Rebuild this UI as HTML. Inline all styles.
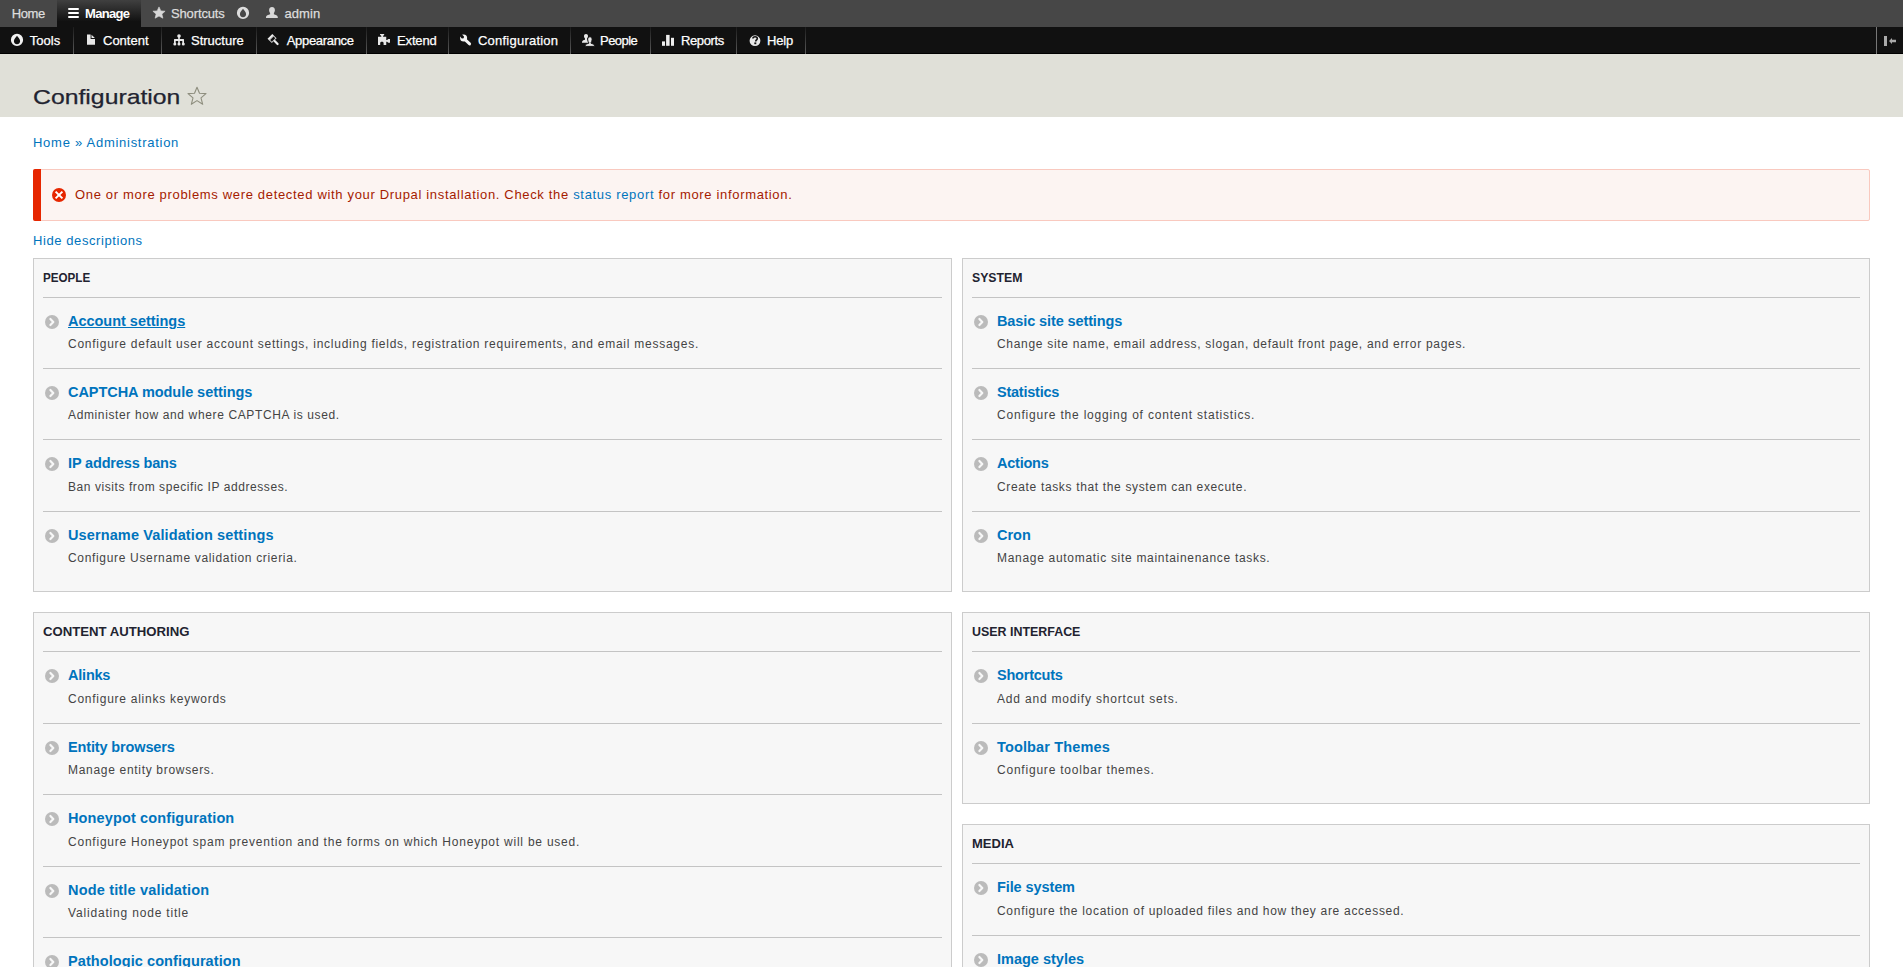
<!DOCTYPE html>
<html><head><meta charset="utf-8">
<style>
*{box-sizing:border-box;margin:0;padding:0}
html,body{width:1903px;height:967px;overflow:hidden;background:#fff}
body{font-family:"Liberation Sans",sans-serif;font-size:13px;color:#222330;position:relative}
a{color:#0074bd;text-decoration:none}
.abs{position:absolute;white-space:nowrap}
#bar{position:absolute;left:0;top:0;width:1903px;height:27px;background:#474747}
#manage{position:absolute;left:57px;top:0;width:84px;height:27px;background:linear-gradient(#404040,#111 80%)}
#tray{position:absolute;left:0;top:27px;width:1903px;height:27px;background:#111;border-bottom:1px solid #000}
.sep{position:absolute;top:0;width:1px;height:27px;background:linear-gradient(#1c1c1c,#5c5c5c)}
.tb{position:absolute;top:0;line-height:27px;font-size:13px;color:#fff;white-space:nowrap;-webkit-text-stroke:0.25px currentColor}
.tbg{color:#ddd}
svg.ic{position:absolute}
#head{position:absolute;left:0;top:54px;width:1903px;height:63px;background:#e0e0d8}
#title{position:absolute;left:32.5px;top:82px;font-size:21px;line-height:30px;color:#222330;-webkit-text-stroke:0.25px #222330;white-space:nowrap;transform:scaleX(1.18);transform-origin:0 0}
#msg{position:absolute;left:33px;top:169px;width:1837px;height:52px;background:#fcf4f2;border:1px solid #f9c9bf;border-radius:2px}
#msgbar{position:absolute;left:33px;top:169px;width:8px;height:52px;background:#e62600;border-radius:2px 0 0 2px}
.txt{letter-spacing:0.7px;line-height:16px}
.panel{position:absolute;background:#f7f7f7;border:1px solid #ccc}
.ph{position:absolute;left:9px;top:11px;transform-origin:0 0;font-size:13px;line-height:16px;font-weight:bold;color:#222330;white-space:nowrap}
.it{position:absolute;left:9px;right:9px;border-top:1px solid #c4c4c4}
.chev{position:absolute;left:2px;top:17px;width:14px;height:14px}
.t{position:absolute;left:25px;top:14px;font-size:14.5px;font-weight:bold;color:#0074bd;white-space:nowrap;line-height:18px}
.d{position:absolute;left:25px;top:38px;font-size:12px;color:#444;white-space:nowrap;line-height:16px}
</style></head><body>
<div id="bar"></div>
<div id="manage"></div>
<div class="tb tbg" id="tb_home" style="left:11.68px;;letter-spacing:-0.360px">Home</div>
<svg class="ic" style="left:68px;top:8px" width="11" height="10" viewBox="0 0 11 10"><rect x="0" y="0" width="11" height="2" rx="1" fill="#fff"/><rect x="0" y="4" width="11" height="2" rx="1" fill="#fff"/><rect x="0" y="8" width="11" height="2" rx="1" fill="#fff"/></svg>
<div class="tb" id="tb_manage" style="left:85.00px;font-weight:bold;-webkit-text-stroke:0;letter-spacing:-0.684px">Manage</div>
<svg class="ic" style="left:152px;top:6px" width="14" height="14" viewBox="0 0 14 14"><path d="M7 0.9 L8.9 4.9 L13.1 5.2 L9.9 8.1 L10.9 12.2 L7 10.1 L3.1 12.2 L4.1 8.1 L0.9 5.2 L5.1 4.9 Z" fill="#d8d8d8" stroke="#d8d8d8" stroke-width="0.6" stroke-linejoin="round"/></svg>
<div class="tb tbg" id="tb_short" style="left:171.00px;;letter-spacing:-0.138px">Shortcuts</div>
<svg class="ic" style="left:236px;top:6px" width="14" height="14" viewBox="0 0 14 14"><path fill-rule="evenodd" fill="#ddd" d="M7 0.8 A6.1 6.1 0 1 1 7 13 A6.1 6.1 0 1 1 7 0.8 Z M7 2.8 C7.6 3.9 10.1 5.8 10.1 8.1 A3.1 3.1 0 0 1 3.9 8.1 C3.9 5.8 6.4 3.9 7 2.8 Z"/></svg>
<svg class="ic" style="left:266px;top:7px" width="12" height="12" viewBox="0 0 12 12"><path fill="#d8d8d8" d="M6 0 C7.7 0 8.9 1.3 8.9 3.1 C8.9 4.4 8.3 5.6 7.9 6.1 L7.9 7.2 C9.6 7.7 11.8 8.3 11.8 10.2 L11.8 11.1 L0 11.1 L0 10.2 C0 8.3 2.3 7.7 4.1 7.2 L4.1 6.1 C3.6 5.6 3.1 4.4 3.1 3.1 C3.1 1.3 4.3 0 6 0 Z"/></svg>
<div class="tb tbg" id="tb_admin" style="left:284.40px;;letter-spacing:0.112px">admin</div>

<div id="tray">
<div class="sep" style="left:73px"></div>
<div class="sep" style="left:161px"></div>
<div class="sep" style="left:256px"></div>
<div class="sep" style="left:366px"></div>
<div class="sep" style="left:448px"></div>
<div class="sep" style="left:570px"></div>
<div class="sep" style="left:650px"></div>
<div class="sep" style="left:736px"></div>
<div class="sep" style="left:805px"></div>
<div class="sep" style="left:1876px;background:#777"></div>
<svg class="ic" style="left:10px;top:6px" width="14" height="14" viewBox="0 0 14 14"><path fill-rule="evenodd" fill="#f2f2f2" d="M7 0.8 A6.1 6.1 0 1 1 7 13 A6.1 6.1 0 1 1 7 0.8 Z M7 2.8 C7.6 3.9 10.1 5.8 10.1 8.1 A3.1 3.1 0 0 1 3.9 8.1 C3.9 5.8 6.4 3.9 7 2.8 Z"/></svg>
<div class="tb" id="tr_tools" style="left:29.80px;letter-spacing:0.000px">Tools</div>
<svg class="ic" style="left:87px;top:7px" width="8" height="11" viewBox="0 0 8 11"><path d="M0 0.5 L3.6 0.5 L3.6 4.9 L8 4.9 L8 10.8 L0 10.8 Z" fill="#e8e8e8"/><path d="M4.5 0.7 L7.9 4.1 L4.5 4.1 Z" fill="#e8e8e8"/></svg>
<div class="tb" id="tr_content" style="left:103.00px;letter-spacing:0.000px">Content</div>
<svg class="ic" style="left:173px;top:7px" width="12" height="12" viewBox="0 0 12 12"><g fill="#e8e8e8"><circle cx="6" cy="2" r="1.8"/><rect x="5.2" y="2.5" width="1.6" height="4"/><rect x="1" y="5.1" width="10" height="1.9" rx="0.9"/><rect x="1" y="5.5" width="1.7" height="4"/><rect x="5.2" y="5.5" width="1.6" height="4"/><rect x="9.3" y="5.5" width="1.7" height="4"/><circle cx="1.8" cy="9.9" r="1.5"/><circle cx="6" cy="10" r="1.5"/><circle cx="10.3" cy="9.9" r="1.5"/></g></svg>
<div class="tb" id="tr_structure" style="left:191.00px;letter-spacing:0.000px">Structure</div>
<svg class="ic" style="left:267px;top:6px" width="14" height="14" viewBox="0 0 14 14"><g transform="translate(5.2 5.6) rotate(-45)"><rect x="-3.4" y="-3.2" width="6.8" height="2.2" fill="#eee"/><rect x="-2.9" y="-1" width="5.8" height="3.4" fill="none" stroke="#ccc" stroke-width="1"/><rect x="-1.1" y="2.4" width="2.2" height="6.3" rx="1.1" fill="#eee"/></g></svg>
<div class="tb" id="tr_appearance" style="left:286.72px;letter-spacing:-0.310px">Appearance</div>
<svg class="ic" style="left:378px;top:6px" width="12" height="12" viewBox="0 0 12 12"><path fill="#e8e8e8" d="M0 3.8 L3.3 3.8 L3.3 2.9 L2 1.7 L2 0.9 L6.2 0.9 L6.2 1.7 L5.1 2.9 L5.1 3.8 L8.25 3.8 L8.25 6.9 L9.1 6.9 L10.3 5.9 L12 5.9 L12 9.8 L10.3 9.8 L9.1 8.8 L8.25 8.8 L8.25 11.9 L5.6 11.9 L5.6 10 C5.6 8.3 2.2 8.3 2.2 10 L2.2 11.9 L0 11.9 Z"/></svg>
<div class="tb" id="tr_extend" style="left:397.00px;letter-spacing:-0.144px">Extend</div>
<svg class="ic" style="left:459px;top:6px" width="14" height="14" viewBox="0 0 14 14"><g><circle cx="4.6" cy="5.1" r="3.5" fill="#f4f4f4"/><line x1="5" y1="5.6" x2="10.6" y2="10.9" stroke="#f4f4f4" stroke-width="2.9" stroke-linecap="round"/><circle cx="3.5" cy="4" r="1.5" fill="#111"/><line x1="3.5" y1="4" x2="0.6" y2="1.1" stroke="#111" stroke-width="2.6"/></g></svg>
<div class="tb" id="tr_config" style="left:478.00px;letter-spacing:0.225px">Configuration</div>
<svg class="ic" style="left:582px;top:6px" width="13" height="14" viewBox="0 0 13 14"><g fill="#e8e8e8"><path d="M4 0.9 C5.2 0.9 6 1.8 6 3.1 C6 4.2 5.5 5.2 5 5.6 L5 6.7 C5.6 6.9 6 7.2 6 7.4 L6 9.8 L0 9.8 L0 9.2 C0 7.8 1.5 7.1 3 6.7 L3 5.6 C2.5 5.2 2 4.2 2 3.1 C2 1.8 2.8 0.9 4 0.9 Z"/><path stroke="#111" stroke-width="1" d="M7.9 3.8 C9.3 3.8 10.1 5 10.1 6.6 C10.1 7.9 9.6 9 9.1 9.5 L9.1 10.3 C10.7 10.8 12.4 11.3 12.4 12.4 L12.4 13.4 L3.3 13.4 L3.3 12.4 C3.3 11.3 5 10.8 6.7 10.3 L6.7 9.5 C6.2 9 5.7 7.9 5.7 6.6 C5.7 5 6.5 3.8 7.9 3.8 Z"/></g></svg>
<div class="tb" id="tr_people" style="left:600.00px;letter-spacing:-0.540px">People</div>
<svg class="ic" style="left:662px;top:7px" width="12" height="12" viewBox="0 0 12 12"><g fill="#eee"><rect x="0" y="7.4" width="3" height="4.4"/><rect x="4.1" y="0.9" width="3.5" height="10.9"/><rect x="9" y="3.8" width="3" height="8"/></g></svg>
<div class="tb" id="tr_reports" style="left:681.00px;letter-spacing:-0.390px">Reports</div>
<svg class="ic" style="left:749px;top:6px" width="12" height="14" viewBox="0 0 12 14"><circle cx="6" cy="7.7" r="5.4" fill="#e8e8e8"/><path d="M3.9 5.6 C3.9 4.4 4.8 3.7 6.1 3.7 C7.4 3.7 8.3 4.4 8.3 5.5 C8.3 6.9 6.7 7 6.7 8.6" fill="none" stroke="#111" stroke-width="1.6"/><rect x="5.3" y="9.4" width="2" height="1.8" fill="#111"/></svg>
<div class="tb" id="tr_help" style="left:767.00px;letter-spacing:-0.180px">Help</div>
<svg class="ic" style="left:1884px;top:9px" width="13" height="10" viewBox="0 0 13 10"><rect x="0" y="0" width="3" height="10" fill="#aaa"/><path d="M5 5 L8 2 L8 3.8 L12 3.8 L12 6.2 L8 6.2 L8 8 Z" fill="#aaa"/></svg>
</div>

<div id="head"></div>
<div id="title">Configuration</div>
<svg class="ic" style="left:187px;top:86px" width="20" height="20" viewBox="0 0 20 20"><path d="M10 1.2 L12.5 7.3 L19 7.6 L14 11.8 L15.7 18.3 L10 14.6 L4.3 18.3 L6 11.8 L1 7.6 L7.5 7.3 Z" fill="none" stroke="#8e8e7e" stroke-width="1.1" stroke-linejoin="round"/></svg>

<div class="abs txt" id="bc" style="left:33px;top:135px;letter-spacing:0.727px"><a>Home</a> <span style="color:#0074bd">»</span> <a>Administration</a></div>

<div id="msg"></div><div id="msgbar"></div>
<svg class="ic" style="left:52px;top:188px" width="14" height="14" viewBox="0 0 14 14"><circle cx="7" cy="7" r="7" fill="#e62600"/><path d="M3.6 3.6 L10.4 10.4 M10.4 3.6 L3.6 10.4" stroke="#fff" stroke-width="2"/></svg>
<div class="abs txt" id="msgt" style="left:75px;top:187px;color:#a51b00;letter-spacing:0.670px">One or more problems were detected with your Drupal installation. Check the <a>status report</a> for more information.</div>

<div class="abs txt" id="hide" style="left:33px;top:233px;letter-spacing:0.587px"><a>Hide descriptions</a></div>

<div class="panel" style="left:33px;top:258px;width:919px;height:334px">
<div class="ph" id="h0" style="transform:scaleX(0.8944)">PEOPLE</div>
<div class="it" style="top:38px;height:71px"><svg class="chev" viewBox="0 0 14 14"><circle cx="7" cy="7" r="7" fill="#bbb"/><path d="M5.4 4 L8.3 7 L5.4 10" fill="none" stroke="#f7f7f7" stroke-width="2.2" stroke-linecap="round" stroke-linejoin="round"/></svg><a class="t" id="t0_0" style="letter-spacing:-0.024px;text-decoration:underline">Account settings</a><div class="d" id="d0_0" style="top:38px;letter-spacing:0.743px">Configure default user account settings, including fields, registration requirements, and email messages.</div></div>
<div class="it" style="top:109px;height:71px"><svg class="chev" viewBox="0 0 14 14"><circle cx="7" cy="7" r="7" fill="#bbb"/><path d="M5.4 4 L8.3 7 L5.4 10" fill="none" stroke="#f7f7f7" stroke-width="2.2" stroke-linecap="round" stroke-linejoin="round"/></svg><a class="t" id="t0_1" style="letter-spacing:-0.056px">CAPTCHA module settings</a><div class="d" id="d0_1" style="top:38px;letter-spacing:0.626px">Administer how and where CAPTCHA is used.</div></div>
<div class="it" style="top:180px;height:72px"><svg class="chev" viewBox="0 0 14 14"><circle cx="7" cy="7" r="7" fill="#bbb"/><path d="M5.4 4 L8.3 7 L5.4 10" fill="none" stroke="#f7f7f7" stroke-width="2.2" stroke-linecap="round" stroke-linejoin="round"/></svg><a class="t" id="t0_2" style="letter-spacing:-0.149px">IP address bans</a><div class="d" id="d0_2" style="top:39px;letter-spacing:0.569px">Ban visits from specific IP addresses.</div></div>
<div class="it" style="top:252px;height:80px"><svg class="chev" viewBox="0 0 14 14"><circle cx="7" cy="7" r="7" fill="#bbb"/><path d="M5.4 4 L8.3 7 L5.4 10" fill="none" stroke="#f7f7f7" stroke-width="2.2" stroke-linecap="round" stroke-linejoin="round"/></svg><a class="t" id="t0_3" style="letter-spacing:0.118px">Username Validation settings</a><div class="d" id="d0_3" style="top:38px;letter-spacing:0.669px">Configure Username validation crieria.</div></div>
</div>
<div class="panel" style="left:962px;top:258px;width:908px;height:334px">
<div class="ph" id="h1" style="transform:scaleX(0.9434)">SYSTEM</div>
<div class="it" style="top:38px;height:71px"><svg class="chev" viewBox="0 0 14 14"><circle cx="7" cy="7" r="7" fill="#bbb"/><path d="M5.4 4 L8.3 7 L5.4 10" fill="none" stroke="#f7f7f7" stroke-width="2.2" stroke-linecap="round" stroke-linejoin="round"/></svg><a class="t" id="t1_0" style="letter-spacing:-0.110px">Basic site settings</a><div class="d" id="d1_0" style="top:38px;letter-spacing:0.695px">Change site name, email address, slogan, default front page, and error pages.</div></div>
<div class="it" style="top:109px;height:71px"><svg class="chev" viewBox="0 0 14 14"><circle cx="7" cy="7" r="7" fill="#bbb"/><path d="M5.4 4 L8.3 7 L5.4 10" fill="none" stroke="#f7f7f7" stroke-width="2.2" stroke-linecap="round" stroke-linejoin="round"/></svg><a class="t" id="t1_1" style="letter-spacing:-0.240px">Statistics</a><div class="d" id="d1_1" style="top:38px;letter-spacing:0.805px">Configure the logging of content statistics.</div></div>
<div class="it" style="top:180px;height:72px"><svg class="chev" viewBox="0 0 14 14"><circle cx="7" cy="7" r="7" fill="#bbb"/><path d="M5.4 4 L8.3 7 L5.4 10" fill="none" stroke="#f7f7f7" stroke-width="2.2" stroke-linecap="round" stroke-linejoin="round"/></svg><a class="t" id="t1_2" style="letter-spacing:-0.240px">Actions</a><div class="d" id="d1_2" style="top:39px;letter-spacing:0.651px">Create tasks that the system can execute.</div></div>
<div class="it" style="top:252px;height:80px"><svg class="chev" viewBox="0 0 14 14"><circle cx="7" cy="7" r="7" fill="#bbb"/><path d="M5.4 4 L8.3 7 L5.4 10" fill="none" stroke="#f7f7f7" stroke-width="2.2" stroke-linecap="round" stroke-linejoin="round"/></svg><a class="t" id="t1_3" style="letter-spacing:-0.030px">Cron</a><div class="d" id="d1_3" style="top:38px;letter-spacing:0.696px">Manage automatic site maintainenance tasks.</div></div>
</div>
<div class="panel" style="left:33px;top:612px;width:919px;height:400px">
<div class="ph" id="h2" style="transform:scaleX(1.0124)">CONTENT AUTHORING</div>
<div class="it" style="top:38px;height:72px"><svg class="chev" viewBox="0 0 14 14"><circle cx="7" cy="7" r="7" fill="#bbb"/><path d="M5.4 4 L8.3 7 L5.4 10" fill="none" stroke="#f7f7f7" stroke-width="2.2" stroke-linecap="round" stroke-linejoin="round"/></svg><a class="t" id="t2_0" style="letter-spacing:-0.216px">Alinks</a><div class="d" id="d2_0" style="top:39px;letter-spacing:0.742px">Configure alinks keywords</div></div>
<div class="it" style="top:110px;height:71px"><svg class="chev" viewBox="0 0 14 14"><circle cx="7" cy="7" r="7" fill="#bbb"/><path d="M5.4 4 L8.3 7 L5.4 10" fill="none" stroke="#f7f7f7" stroke-width="2.2" stroke-linecap="round" stroke-linejoin="round"/></svg><a class="t" id="t2_1" style="letter-spacing:-0.140px">Entity browsers</a><div class="d" id="d2_1" style="top:38px;letter-spacing:0.689px">Manage entity browsers.</div></div>
<div class="it" style="top:181px;height:72px"><svg class="chev" viewBox="0 0 14 14"><circle cx="7" cy="7" r="7" fill="#bbb"/><path d="M5.4 4 L8.3 7 L5.4 10" fill="none" stroke="#f7f7f7" stroke-width="2.2" stroke-linecap="round" stroke-linejoin="round"/></svg><a class="t" id="t2_2" style="letter-spacing:0.129px">Honeypot configuration</a><div class="d" id="d2_2" style="top:39px;letter-spacing:0.773px">Configure Honeypot spam prevention and the forms on which Honeypot will be used.</div></div>
<div class="it" style="top:253px;height:71px"><svg class="chev" viewBox="0 0 14 14"><circle cx="7" cy="7" r="7" fill="#bbb"/><path d="M5.4 4 L8.3 7 L5.4 10" fill="none" stroke="#f7f7f7" stroke-width="2.2" stroke-linecap="round" stroke-linejoin="round"/></svg><a class="t" id="t2_3" style="letter-spacing:0.171px">Node title validation</a><div class="d" id="d2_3" style="top:38px;letter-spacing:0.820px">Validating node title</div></div>
<div class="it" style="top:324px;height:74px"><svg class="chev" viewBox="0 0 14 14"><circle cx="7" cy="7" r="7" fill="#bbb"/><path d="M5.4 4 L8.3 7 L5.4 10" fill="none" stroke="#f7f7f7" stroke-width="2.2" stroke-linecap="round" stroke-linejoin="round"/></svg><a class="t" id="t2_4" style="letter-spacing:0.078px">Pathologic configuration</a></div>
</div>
<div class="panel" style="left:962px;top:612px;width:908px;height:192px">
<div class="ph" id="h3" style="transform:scaleX(0.9558)">USER INTERFACE</div>
<div class="it" style="top:38px;height:72px"><svg class="chev" viewBox="0 0 14 14"><circle cx="7" cy="7" r="7" fill="#bbb"/><path d="M5.4 4 L8.3 7 L5.4 10" fill="none" stroke="#f7f7f7" stroke-width="2.2" stroke-linecap="round" stroke-linejoin="round"/></svg><a class="t" id="t3_0" style="letter-spacing:-0.225px">Shortcuts</a><div class="d" id="d3_0" style="top:39px;letter-spacing:0.815px">Add and modify shortcut sets.</div></div>
<div class="it" style="top:110px;height:80px"><svg class="chev" viewBox="0 0 14 14"><circle cx="7" cy="7" r="7" fill="#bbb"/><path d="M5.4 4 L8.3 7 L5.4 10" fill="none" stroke="#f7f7f7" stroke-width="2.2" stroke-linecap="round" stroke-linejoin="round"/></svg><a class="t" id="t3_1" style="letter-spacing:0.138px">Toolbar Themes</a><div class="d" id="d3_1" style="top:38px;letter-spacing:0.786px">Configure toolbar themes.</div></div>
</div>
<div class="panel" style="left:962px;top:824px;width:908px;height:200px">
<div class="ph" id="h4" style="transform:scaleX(1.0000)">MEDIA</div>
<div class="it" style="top:38px;height:72px"><svg class="chev" viewBox="0 0 14 14"><circle cx="7" cy="7" r="7" fill="#bbb"/><path d="M5.4 4 L8.3 7 L5.4 10" fill="none" stroke="#f7f7f7" stroke-width="2.2" stroke-linecap="round" stroke-linejoin="round"/></svg><a class="t" id="t4_0" style="letter-spacing:-0.099px">File system</a><div class="d" id="d4_0" style="top:39px;letter-spacing:0.704px">Configure the location of uploaded files and how they are accessed.</div></div>
<div class="it" style="top:110px;height:88px"><svg class="chev" viewBox="0 0 14 14"><circle cx="7" cy="7" r="7" fill="#bbb"/><path d="M5.4 4 L8.3 7 L5.4 10" fill="none" stroke="#f7f7f7" stroke-width="2.2" stroke-linecap="round" stroke-linejoin="round"/></svg><a class="t" id="t4_1" style="letter-spacing:0.000px">Image styles</a></div>
</div>
</body></html>
